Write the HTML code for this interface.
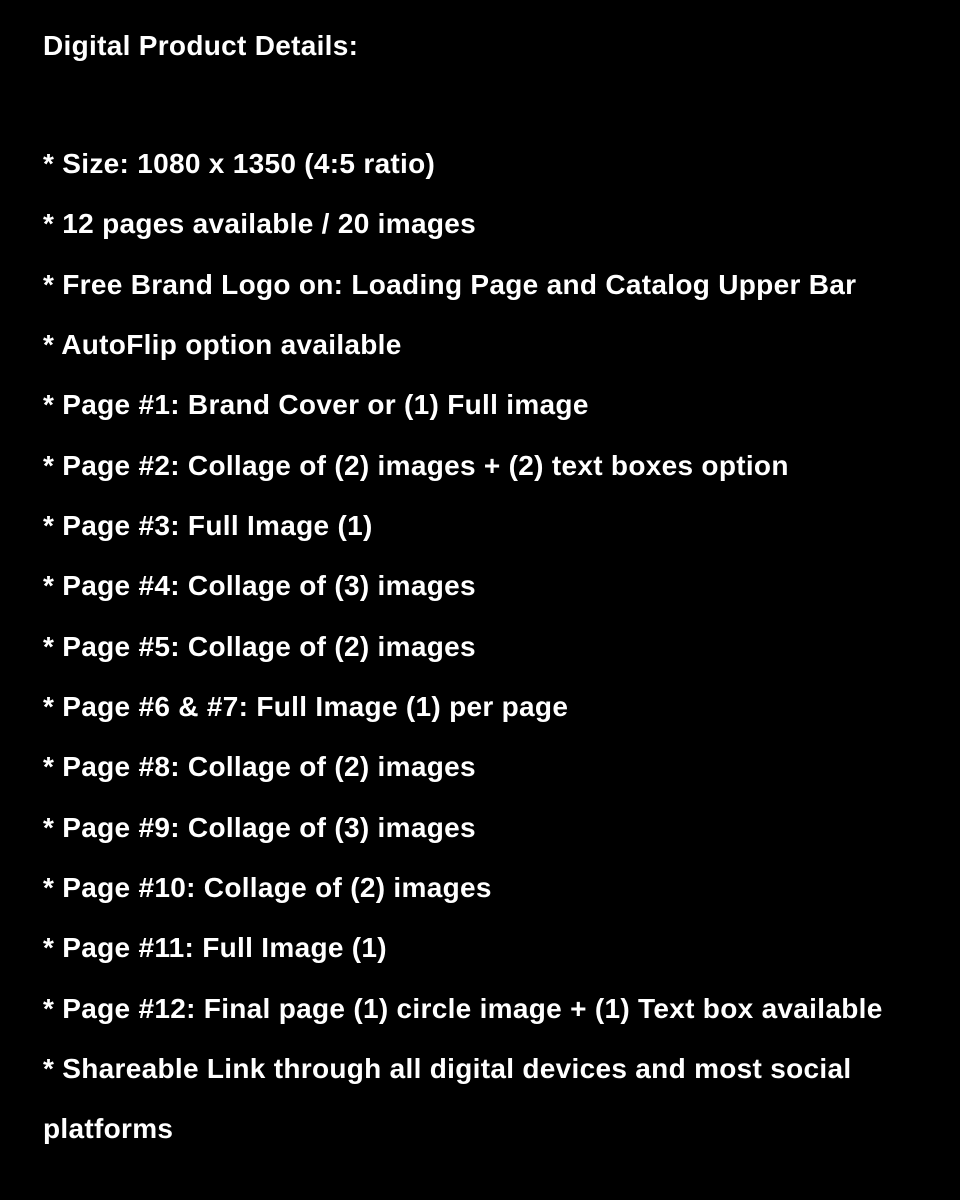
<!DOCTYPE html>
<html><head><meta charset="utf-8"><style>
html,body{margin:0;padding:0;background:#000;width:960px;height:1200px;overflow:hidden}
body{font-family:"Liberation Sans",sans-serif;font-weight:bold;color:#fff;font-size:28px;letter-spacing:0.3px}
.t{position:absolute;left:43px;top:16px;line-height:60px;white-space:nowrap}
.l{position:absolute;left:43px;top:134px;line-height:60.33px;white-space:nowrap}
</style></head><body>
<div class="t">Digital Product Details:</div>
<div class="l">
* Size: 1080 x 1350 (4:5 ratio)<br>
* 12 pages available / 20 images<br>
* Free Brand Logo on: Loading Page and Catalog Upper Bar<br>
* AutoFlip option available<br>
* Page #1: Brand Cover or (1) Full image<br>
* Page #2: Collage of (2) images + (2) text boxes option<br>
* Page #3: Full Image (1)<br>
* Page #4: Collage of (3) images<br>
* Page #5: Collage of (2) images<br>
* Page #6 &amp; #7: Full Image (1) per page<br>
* Page #8: Collage of (2) images<br>
* Page #9: Collage of (3) images<br>
* Page #10: Collage of (2) images<br>
* Page #11: Full Image (1)<br>
* Page #12: Final page (1) circle image + (1) Text box available<br>
* Shareable Link through all digital devices and most social<br>
platforms
</div>
</body></html>
